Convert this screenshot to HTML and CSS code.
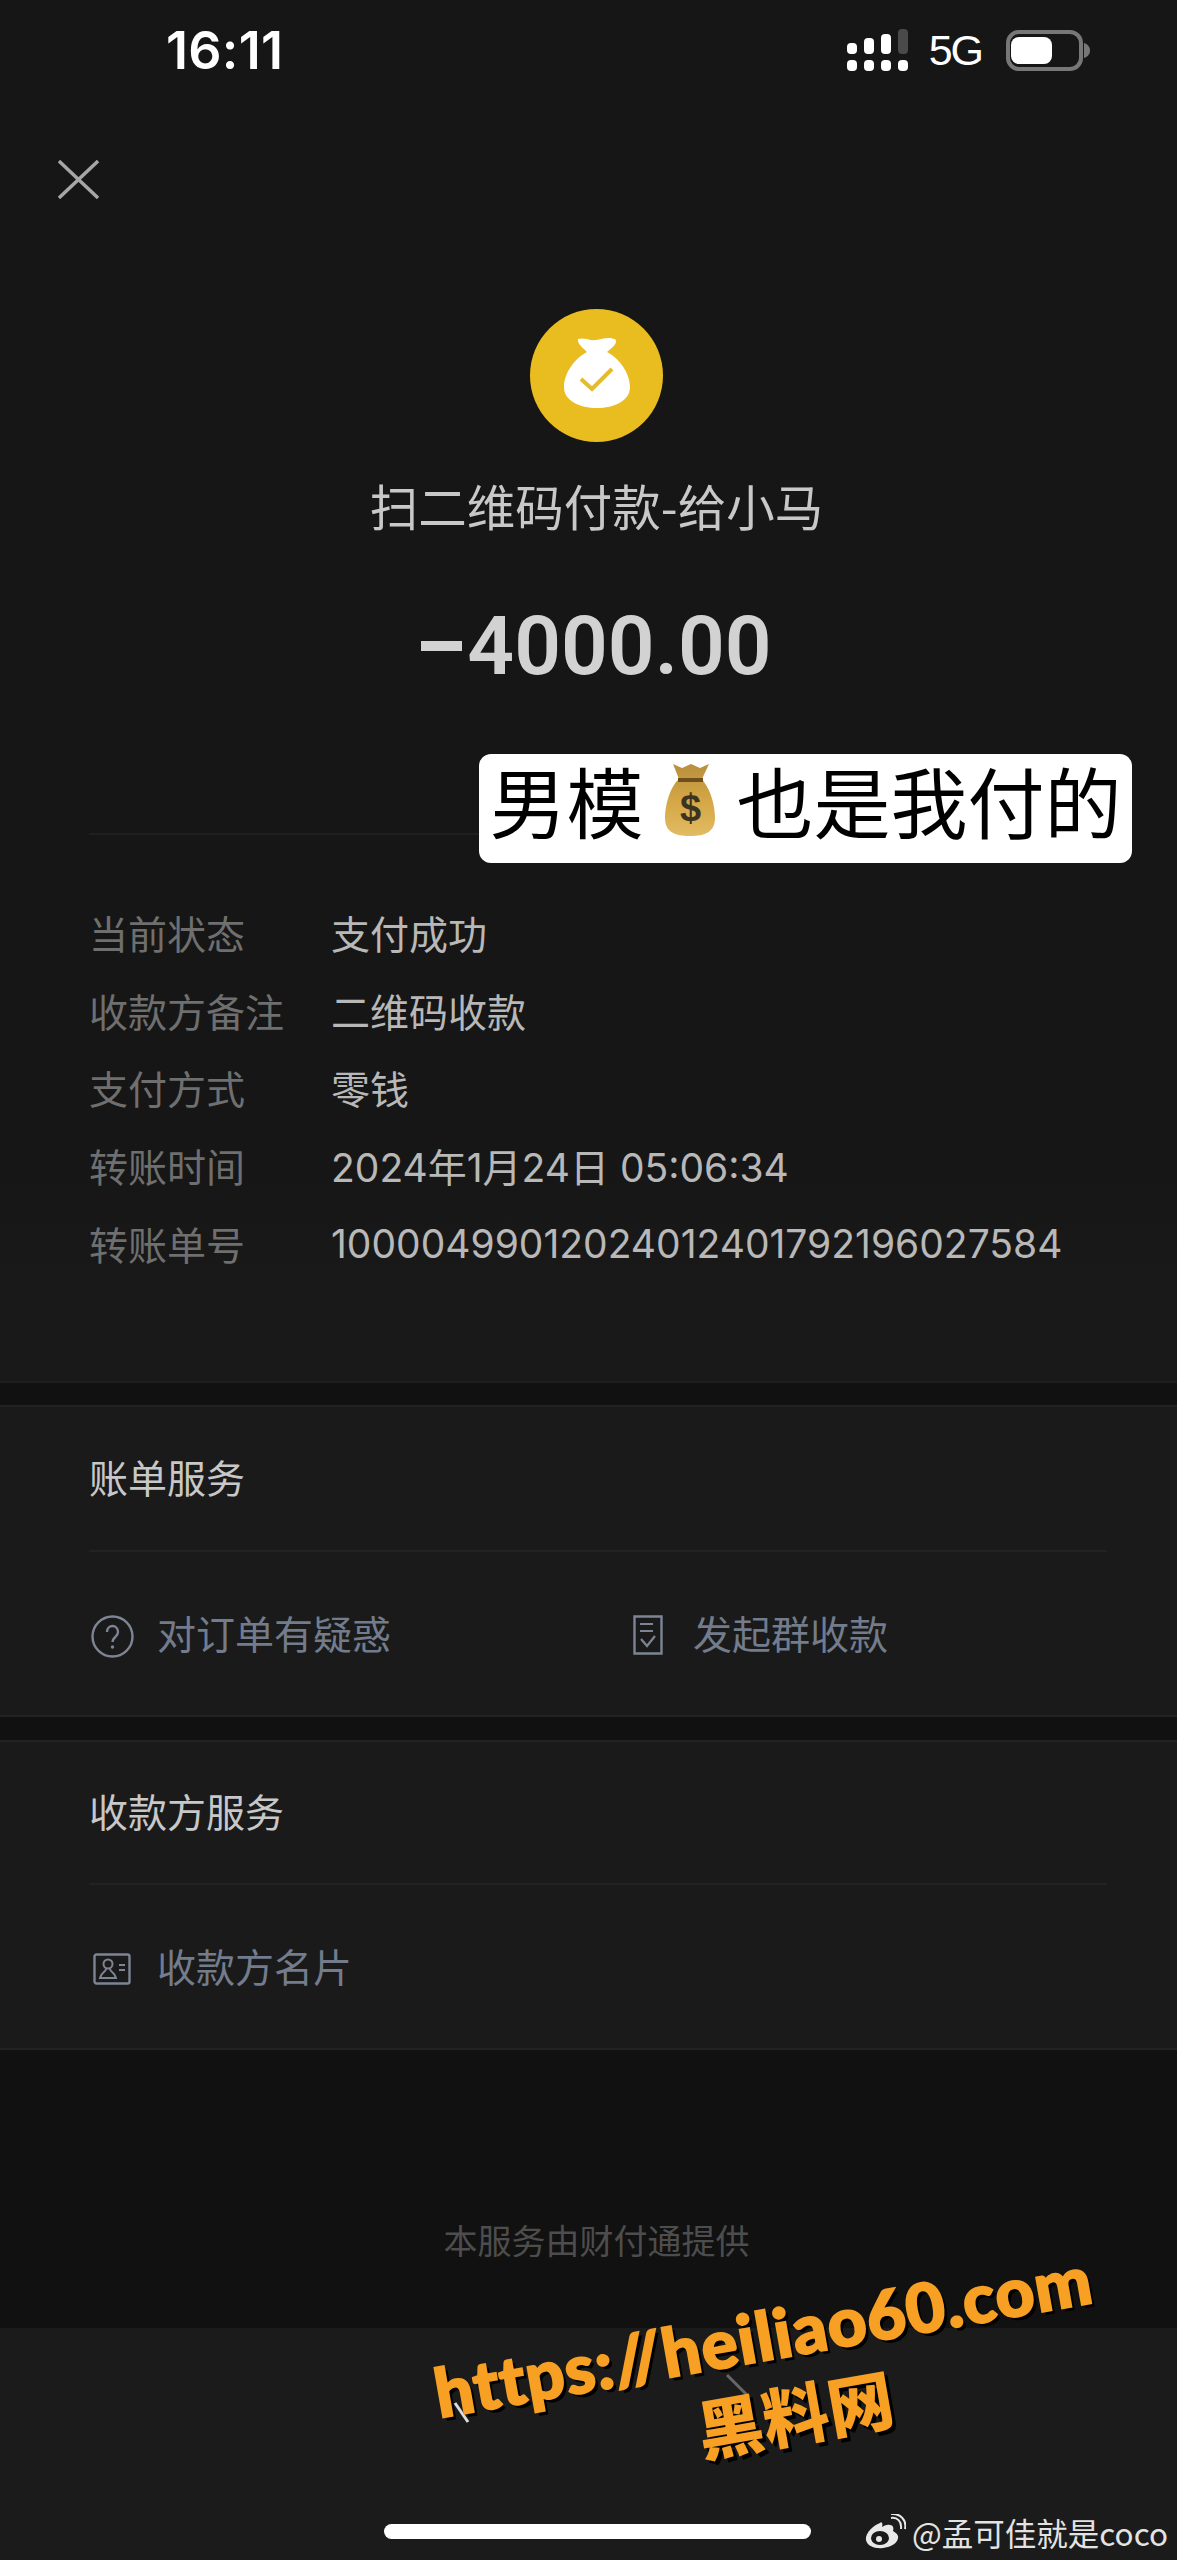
FILE: index.html
```html
<!DOCTYPE html>
<html lang="zh-CN">
<head>
	<meta charset="UTF-8">
	<title>账单详情</title>
	<link rel="stylesheet" href="styles.css">
</head>
<body>
	<div class="page">
		<div class="top">
			<div class="status">
				<span class="time">16:11</span>
				<div class="status-r">
					<svg width="61" height="42" viewBox="0 0 61 42">
						<g fill="#fff">
							<rect x="0" y="14" width="10" height="11" rx="4"/><rect x="17" y="9" width="10" height="16" rx="4"/><rect x="34" y="5" width="10" height="20" rx="4"/>
							<rect x="0" y="31" width="10" height="11" rx="4"/><rect x="17" y="31" width="10" height="11" rx="4"/><rect x="34" y="31" width="10" height="11" rx="4"/><rect x="51" y="31" width="10" height="11" rx="4"/>
						</g>
						<rect x="51" y="0" width="10" height="25" rx="4" fill="#4a4a4a"/>
					</svg>
					<span class="net">5G</span>
					<svg width="84" height="41" viewBox="0 0 84 41">
						<rect x="2" y="2" width="73" height="37" rx="11" fill="none" stroke="#777" stroke-width="4"/>
						<rect x="5" y="7" width="41" height="27" rx="8" fill="#fff"/>
						<path d="M78 13c8 2 8 13 0 15z" fill="#777"/>
					</svg>
				</div>
			</div>

			<svg class="close" width="41" height="39" viewBox="0 0 41 39"><path d="M1 1L40 38M40 1L1 38" stroke="#a6a6a6" stroke-width="3.4" fill="none"/></svg>

			<div class="head">
				<div class="logo">
					<svg width="66" height="71" viewBox="0 0 66 71">
						<path d="M14 2C20 0 26 4 32 3S46-1 52 3C53 8 46 12 43 15 55 21 66 36 66 50 66 64 50 71 33 71S0 64 0 50C0 36 11 21 23 15 19 11 13 7 14 2z" fill="#fff"/>
						<path d="M17 42l11 10 20-20" fill="none" stroke="#e3bb2c" stroke-width="4"/>
					</svg>
				</div>
				<div class="pay-name">扫二维码付款-给小马</div>
				<div class="amount"><span class="minus"></span>4000.00</div>
			</div>

			<div class="main">
				<div class="line"><span class="k">当前状态</span><span class="v">支付成功</span></div>
				<div class="line"><span class="k">收款方备注</span><span class="v">二维码收款</span></div>
				<div class="line"><span class="k">支付方式</span><span class="v">零钱</span></div>
				<div class="line"><span class="k">转账时间</span><span class="v">2024年1月24日 05:06:34</span></div>
				<div class="line"><span class="k">转账单号</span><span class="v">10000499012024012401792196027584</span></div>
			</div>
		</div>

		<div class="card">
			<div class="card-title">账单服务</div>
			<div class="card-links">
				<a class="link link-a">
					<svg width="43" height="43" viewBox="0 0 43 43"><circle cx="21.5" cy="21.5" r="20" fill="none" stroke="#7d8594" stroke-width="2.4"/><path d="M16 17c0-8 11-8 11 0 0 5-5.5 5-5.5 10" fill="none" stroke="#7d8594" stroke-width="2.4"/><circle cx="21.5" cy="32" r="1.7" fill="#7d8594"/></svg>
					对订单有疑惑
				</a>
				<a class="link link-b">
					<svg width="30" height="40" viewBox="0 0 30 40"><path d="M1.5 1.5h27v37h-27z" fill="none" stroke="#7d8594" stroke-width="2.4"/><path d="M7 9h13M7 16h13" stroke="#7d8594" stroke-width="2.2"/><path d="M8 24l6 7 8-10" fill="none" stroke="#7d8594" stroke-width="2.2"/></svg>
					发起群收款
				</a>
			</div>
		</div>

		<div class="card card-2">
			<div class="card-title">收款方服务</div>
			<div class="card-links">
				<a class="link link-c">
					<svg width="38" height="32" viewBox="0 0 38 32"><rect x="1.5" y="1.5" width="35" height="29" rx="2" fill="none" stroke="#7d8594" stroke-width="2.4"/><circle cx="15" cy="11" r="4.5" fill="none" stroke="#7d8594" stroke-width="2"/><path d="M13 16c0 3-5 3-6 9h16c-1-6-6-6-6-9" fill="none" stroke="#7d8594" stroke-width="2"/><path d="M26 12h6M26 17h6" stroke="#7d8594" stroke-width="2"/></svg>
					收款方名片
				</a>
			</div>
		</div>

		<div class="provider">本服务由财付通提供</div>
		<div class="bottom">
			<svg class="arrows" width="320" height="100" viewBox="0 0 320 100">
				<path d="M287 7l20 20" stroke="#666" stroke-width="3" fill="none"/>
				<path d="M15 35l13 19" stroke="#ddd" stroke-width="3" fill="none"/>
			</svg>
			<div class="home-bar"></div>
		</div>

		<!-- 贴纸和水印是盖在截图上面的 -->
		<div class="sticker">男模<svg width="57" height="73" viewBox="0 0 57 73">
			<defs>
				<linearGradient id="bag" x1="0" y1="0" x2="0" y2="1">
					<stop offset="0" stop-color="#b98f3e"/>
					<stop offset="0.5" stop-color="#d4a645"/>
					<stop offset="1" stop-color="#e2bb63"/>
				</linearGradient>
			</defs>
			<path d="M11 1l9 4 9-4 9 4 9-4-7 15 2 3c7 9 11 24 11 36 0 14-10 18-25 18S3 69 3 55c0-12 4-27 11-36l3-3z" fill="url(#bag)"/>
			<path d="M16 15h25v4H16z" fill="#6d4e1c"/>
			<text class="bag-sign" x="28.5" y="58" text-anchor="middle">$</text>
		</svg>也是我付的</div>
		<div class="mark">
			<div class="mark-url">https://heiliao60.com</div>
			<div class="mark-name">黑料网</div>
		</div>
		<div class="weibo">
			<svg width="42" height="36" viewBox="0 0 42 36">
				<path d="M16 9C8 12 1 20 2 26c1 6 9 9 17 8 9-1 16-6 15-12-1-3-4-4-5-5 1-3 0-6-3-6-3-1-6 1-8 2 1-3 0-6-2-4z" fill="#e8e8e8"/>
				<ellipse cx="16" cy="24" rx="9" ry="7" fill="#1a1a1a"/><circle cx="15" cy="25" r="3" fill="#e8e8e8"/>
				<path d="M27 4c6-1 11 3 10 11M27 0c9-1 16 6 14 15" fill="none" stroke="#e8e8e8" stroke-width="2"/>
			</svg>
			<span>@孟可佳就是coco</span>
		</div>
	</div>
</body>
</html>
```

FILE: styles.css
```css
*{
	margin:0;
	padding:0;
	box-sizing:border-box;
}
body{
	background:#111;
	font-family:"Noto Sans CJK SC","Liberation Sans",sans-serif;
}
.page{
	position:relative;
	width:1177px;
	height:2560px;
	overflow:hidden;
	background:#111;
	display:flex;
	flex-direction:column;
}
.top{
	height:1383px;
	background:linear-gradient(#161616 1150px,#191919 1300px);
	border-bottom:2px solid #1f1f1f;
	display:flex;
	flex-direction:column;
	flex-shrink:0;
}
.status{
	height:100px;
	padding:0 87px 0 166px;
	display:flex;
	justify-content:space-between;
	align-items:center;
	flex-shrink:0;
}
.time{
	font:600 52px "Inter","Liberation Sans",sans-serif;
	letter-spacing:.3px;
	color:#fff;
}
.status-r{
	display:flex;
	align-items:center;
	gap:21px;
}
.net{
	margin-right:3px;
	font:400 43px "Liberation Sans",sans-serif;
	letter-spacing:-2px;
	color:#fff;
}
.close{
	margin:60px 0 0 58px;
	flex-shrink:0;
}
.head{
	margin-top:110px;
	padding-left:16px;
	display:flex;
	flex-direction:column;
	align-items:center;
	flex-shrink:0;
}
.logo{
	width:133px;
	height:133px;
	padding-bottom:6px;
	border-radius:50%;
	background:#e9bd1f;
	display:flex;
	align-items:center;
	justify-content:center;
}
.pay-name{
	margin-top:30px;
	font-size:48.5px;
	line-height:66px;
	color:#c8c8c8;
}
.amount{
	margin-top:58px;
	display:flex;
	align-items:center;
	font:600 82px/100px "Roboto","Liberation Sans",sans-serif;
	color:#d2d2d2;
}
.minus{
	width:41px;
	height:10px;
	margin-right:5px;
	background:#d2d2d2;
}
.main{
	height:546px;
	margin:137px 70px 0 89px;
	padding-top:58px;
	border-top:2px solid #1f1f1f;
	flex-shrink:0;
}
.line{
	display:flex;
	height:77.8px;
	align-items:center;
	font-size:39px;
}
.k{
	width:242px;
	color:#6f6f6f;
}
.v{
	color:#b8b8b8;
	font-family:"Inter","Noto Sans CJK SC",sans-serif;
}
.card{
	height:312px;
	margin-top:22px;
	background:#1a1a1a;
	border-top:2px solid #222;
	border-bottom:2px solid #222;
	padding-left:89px;
	flex-shrink:0;
}
.card-2{
	height:310px;
	margin-top:23px;
}
.card-title{
	height:145px;
	padding-bottom:6px;
	margin-right:70px;
	border-bottom:2px solid #222;
	display:flex;
	align-items:center;
	font-size:39px;
	color:#c8c8c8;
}
.card-2 .card-title{
	height:143px;
}
.card-links{
	height:163px;
	padding-bottom:3px;
	display:flex;
	align-items:center;
}
.link{
	display:flex;
	align-items:center;
	gap:23px;
	font-size:39px;
	color:#737c8c;
}
.link svg{
	margin-top:8px;
}
.link-a{
	width:544px;
	padding-left:2px;
}
.link-b{
	gap:30px;
}
.link-b svg{
	margin-top:6px;
}
.link-c{
	padding-left:4px;
	gap:26px;
}
.provider{
	margin-top:165px;
	padding-left:16px;
	text-align:center;
	font-size:34px;
	line-height:50px;
	color:#4d4d4d;
	flex-shrink:0;
}
.bottom{
	margin-top:63px;
	flex-grow:1;
	background:#1b1b1b;
	position:relative;
}
.arrows{
	position:absolute;
	left:440px;
	top:40px;
}
.home-bar{
	position:absolute;
	left:384px;
	bottom:21px;
	width:427px;
	height:15px;
	border-radius:8px;
	background:#fff;
}
.sticker{
	position:absolute;
	left:479px;
	top:754px;
	width:653px;
	height:109px;
	padding-bottom:18px;
	border-radius:12px;
	background:#fff;
	display:flex;
	align-items:center;
	justify-content:center;
	gap:18px;
	font-size:77px;
	color:#000;
	white-space:nowrap;
}
.bag-sign{
	font:700 38px "Liberation Sans",sans-serif;
	fill:#3d3320;
}
.mark{
	position:absolute;
	left:420px;
	top:2294px;
	width:700px;
	transform:rotate(-10deg);
	text-align:center;
	color:#f7a023;
	font-family:"Lato","Noto Sans CJK SC",sans-serif;
	font-weight:900;
	text-shadow:3px 4px 0 #000;
}
.mark-url{
	font-size:67.5px;
	line-height:80px;
	white-space:nowrap;
	letter-spacing:1px;
	-webkit-text-stroke:2px #f7a023;
}
.mark-name{
	margin:1px 0 0 36px;
	font-size:66px;
	line-height:80px;
	font-family:"Noto Sans CJK SC",sans-serif;
}
.weibo{
	position:absolute;
	left:864px;
	top:2512px;
	display:flex;
	align-items:center;
	gap:6px;
	font-size:31.5px;
	line-height:40px;
	color:#e3e3e3;
	white-space:nowrap;
}
```
